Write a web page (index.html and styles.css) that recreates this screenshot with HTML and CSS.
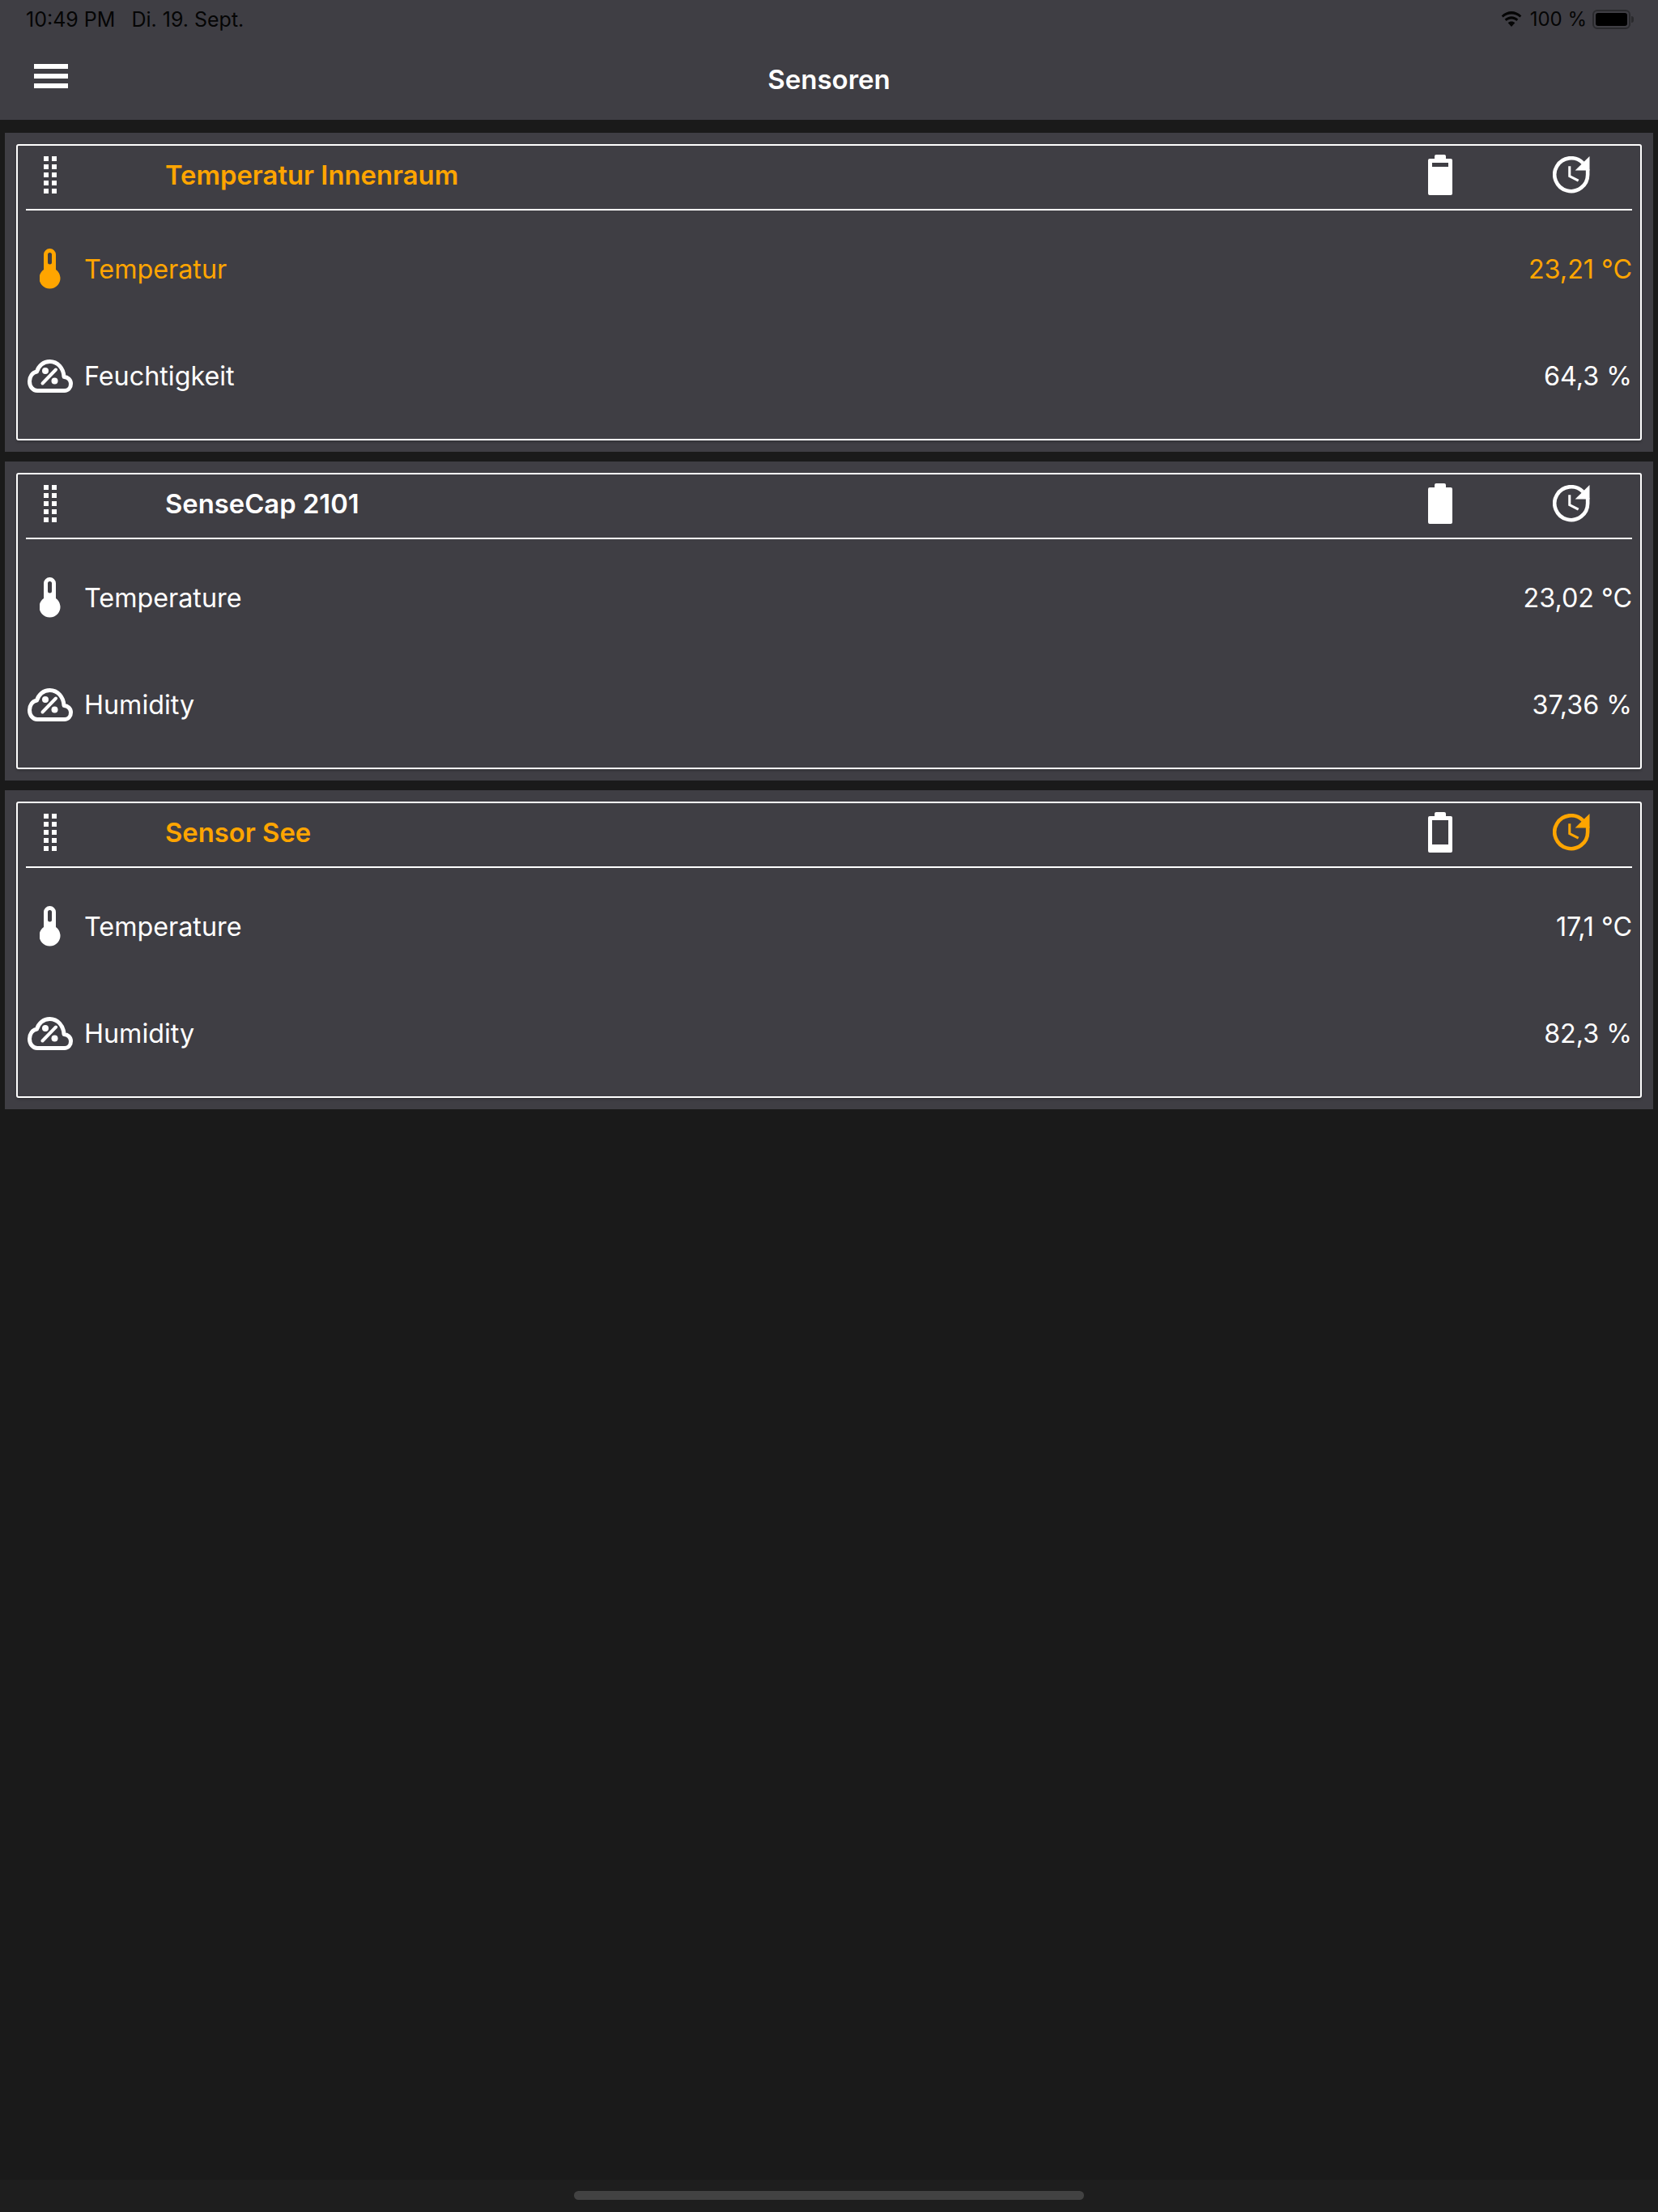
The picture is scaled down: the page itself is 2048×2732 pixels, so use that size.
FILE: index.html
```html
<!DOCTYPE html>
<html lang="de">
<head>
<meta charset="utf-8">
<title>Sensoren</title>
<link rel="stylesheet" href="styles.css">
</head>
<body>
<svg class="defs" width="0" height="0">
  <symbol id="thermo" viewBox="0 0 26 50"><path fill-rule="evenodd" d="M5 7.5a7.5 7.5 0 0 1 15 0V26a13 13 0 1 1-15 0ZM10 7.500v9.500a2.500 2.500 0 0 0 5 0V7.500a2.500 2.500 0 0 0-5 0Z"/></symbol>
  <symbol id="cloud" viewBox="0 0 56 41">
    <path fill="none" stroke="currentColor" stroke-width="5" stroke-linejoin="round" d="M12 38.500H45.500C50.500 38.500 53.500 34.500 53.500 30C53.500 25 49.500 21.500 45 21.500C44.500 10.500 37 2.500 27.500 2.500C19.500 2.500 13.500 8 11.500 15C6 16 2.500 21 2.500 27C2.500 33.500 6.500 38.500 12 38.500Z"/>
    <path fill="none" stroke="currentColor" stroke-width="4" stroke-linecap="round" d="M18.500 29.500L35 12.500"/>
    <circle cx="22" cy="14" r="4" fill="currentColor"/>
    <circle cx="33.500" cy="26.500" r="4" fill="currentColor"/>
  </symbol>
  <symbol id="batt-full" viewBox="0 0 30 50"><path d="M8 2a2 2 0 0 1 2-2h10a2 2 0 0 1 2 2v3h6a2 2 0 0 1 2 2v41a2 2 0 0 1-2 2H2a2 2 0 0 1-2-2V7a2 2 0 0 1 2-2h6Z"/></symbol>
  <symbol id="batt-high" viewBox="0 0 30 50"><path fill-rule="evenodd" d="M8 2a2 2 0 0 1 2-2h10a2 2 0 0 1 2 2v3h6a2 2 0 0 1 2 2v41a2 2 0 0 1-2 2H2a2 2 0 0 1-2-2V7a2 2 0 0 1 2-2h6ZM5 10v5h20v-5Z"/></symbol>
  <symbol id="batt-low" viewBox="0 0 30 50"><path fill-rule="evenodd" d="M8 2a2 2 0 0 1 2-2h10a2 2 0 0 1 2 2v3h6a2 2 0 0 1 2 2v41a2 2 0 0 1-2 2H2a2 2 0 0 1-2-2V7a2 2 0 0 1 2-2h6ZM5 10v30h20V10Z"/></symbol>
  <symbol id="clock" viewBox="0 0 45 45">
    <path fill="none" stroke="currentColor" stroke-width="4.500" d="M42.200 16V22.200A20 20 0 1 1 36.500 8.200"/>
    <path fill="currentColor" d="M44.500 0V17H27Z"/>
    <path fill="none" stroke="currentColor" stroke-width="3" d="M20.300 12V24L31 29.500"/>
  </symbol>
</svg>

<header class="topbar">
  <div class="status">
    <span class="time">10:49 PM</span>
    <span class="date">Di. 19. Sept.</span>
    <span class="status-right">
      <svg class="wifi" viewBox="0 0 28 20"><path d="M14 3.500c4 0 7.500 1.500 10.300 4.100l2-2.200C22.700 2 18.500 0 14 0S5.300 2 1.700 5.400l2 2.200C6.500 5 10 3.500 14 3.500Z"/><path d="M14 9.500c2.500 0 4.700 1 6.300 2.500l2-2.200C20 7.500 17.100 6.200 14 6.200s-6 1.300-8.300 3.600l2 2.200C9.300 10.500 11.500 9.500 14 9.500Z"/><path d="M14 12.500c-1.700 0-3.200.7-4.300 1.700L14 19l4.300-4.800c-1.100-1-2.600-1.700-4.300-1.700Z"/></svg>
      <span class="pct">100 %</span>
      <span class="sysbatt"><span class="sysbatt-fill"></span></span>
      <span class="sysbatt-cap"></span>
    </span>
  </div>
  <div class="nav">
    <span class="burger"><i></i><i></i><i></i></span>
    <span class="nav-title">Sensoren</span>
  </div>
</header>

<main class="list">
  <section class="card">
    <div class="frame">
      <div class="head">
        <span class="grip"><i></i><i></i><i></i><i></i><i></i><i></i><i></i><i></i><i></i><i></i></span>
        <span class="name warn">Temperatur Innenraum</span>
        <svg class="ico-batt"><use href="#batt-high"/></svg>
        <svg class="ico-clock"><use href="#clock"/></svg>
      </div>
      <div class="row warn">
        <span class="row-icon"><svg class="ico-thermo"><use href="#thermo"/></svg></span>
        <span class="label">Temperatur</span>
        <span class="value">23,21 °C</span>
      </div>
      <div class="row">
        <span class="row-icon"><svg class="ico-cloud"><use href="#cloud"/></svg></span>
        <span class="label">Feuchtigkeit</span>
        <span class="value">64,3 %</span>
      </div>
    </div>
  </section>

  <section class="card">
    <div class="frame">
      <div class="head">
        <span class="grip"><i></i><i></i><i></i><i></i><i></i><i></i><i></i><i></i><i></i><i></i></span>
        <span class="name">SenseCap 2101</span>
        <svg class="ico-batt"><use href="#batt-full"/></svg>
        <svg class="ico-clock"><use href="#clock"/></svg>
      </div>
      <div class="row">
        <span class="row-icon"><svg class="ico-thermo"><use href="#thermo"/></svg></span>
        <span class="label">Temperature</span>
        <span class="value">23,02 °C</span>
      </div>
      <div class="row">
        <span class="row-icon"><svg class="ico-cloud"><use href="#cloud"/></svg></span>
        <span class="label">Humidity</span>
        <span class="value">37,36 %</span>
      </div>
    </div>
  </section>

  <section class="card">
    <div class="frame">
      <div class="head">
        <span class="grip"><i></i><i></i><i></i><i></i><i></i><i></i><i></i><i></i><i></i><i></i></span>
        <span class="name warn">Sensor See</span>
        <svg class="ico-batt"><use href="#batt-low"/></svg>
        <svg class="ico-clock warn"><use href="#clock"/></svg>
      </div>
      <div class="row">
        <span class="row-icon"><svg class="ico-thermo"><use href="#thermo"/></svg></span>
        <span class="label">Temperature</span>
        <span class="value">17,1 °C</span>
      </div>
      <div class="row">
        <span class="row-icon"><svg class="ico-cloud"><use href="#cloud"/></svg></span>
        <span class="label">Humidity</span>
        <span class="value">82,3 %</span>
      </div>
    </div>
  </section>
</main>

<footer class="homearea"><span class="homebar"></span></footer>
</body>
</html>
```
FILE: styles.css
```css
* { box-sizing: border-box; }
html, body { margin: 0; height: 100%; }
body {
  width: 2048px;
  height: 2732px;
  background: #1a1a1a;
  color: #fff;
  font-family: Inter, "Noto Sans", sans-serif;
  display: flex;
  flex-direction: column;
  overflow: hidden;
}
.defs { position: absolute; }
svg { fill: currentColor; display: block; }

.topbar { height: 148px; background: #3f3e44; flex: none; }
.status {
  height: 47px;
  padding: 0 30px 0 32px;
  display: flex;
  align-items: center;
  color: #050505;
  font-size: 25px;
}
.date { margin-left: 20px; }
.status-right { margin-left: auto; display: flex; align-items: center; }
.wifi { width: 28px; height: 20px; margin-right: 9px; }
.pct { margin-right: 7px; font-size: 24px; }
.sysbatt {
  width: 47px;
  height: 24px;
  border: 2px solid #2a2a2d;
  border-radius: 6px;
  padding: 2px;
  display: block;
}
.sysbatt-fill { display: block; height: 100%; background: #000; border-radius: 3px; }
.sysbatt-cap { width: 3px; height: 8px; background: #2a2a2d; border-radius: 0 3px 3px 0; margin-left: 1px; }

.nav { height: 101px; position: relative; display: flex; align-items: center; justify-content: center; }
.nav-title { font-size: 33px; font-weight: 600; }
.burger {
  position: absolute;
  left: 42px;
  top: 32px;
  width: 42px;
  display: flex;
  flex-direction: column;
  gap: 6px;
}
.burger i { display: block; height: 6px; background: #fff; }

.list {
  flex: 1;
  padding: 16px 6px 0;
  display: flex;
  flex-direction: column;
  gap: 12px;
}
.card { height: 394px; background: #3f3e44; padding: 14px; }
.frame {
  height: 366px;
  border: 2px solid #fff;
  border-radius: 3px;
  padding: 0 10px;
  box-shadow: 0 2px 3px rgba(0,0,0,.2);
}
.head {
  height: 80px;
  padding-bottom: 6px;
  border-bottom: 2px solid #fff;
  display: flex;
  align-items: center;
}
.grip {
  width: 16px;
  margin: 0 22px;
  display: grid;
  grid-template-columns: 6px 6px;
  column-gap: 4px;
  row-gap: 4px;
  flex: none;
}
.grip i { display: block; width: 6px; height: 6px; background: #fff; }
.name {
  font-size: 32.800px;
  font-weight: 600;
  margin-left: 112px;
  flex: 1;
  white-space: nowrap;
}
.warn { color: #ffa500; }
.ico-batt { width: 30px; height: 50px; flex: none; }
.ico-clock { width: 46px; height: 46px; margin: 0 52px 0 124px; flex: none; }

.row {
  height: 132px;
  display: flex;
  align-items: center;
  font-size: 32.300px;
}
.head + .row { margin-top: 6px; }
.row-icon { width: 60px; margin-right: 12px; display: flex; justify-content: center; flex: none; }
.ico-thermo { width: 26px; height: 50px; }
.ico-cloud { width: 56px; height: 41px; }
.value { margin-left: auto; }

.homearea {
  height: 40px;
  flex: none;
  background: #1e1e1e;
  display: flex;
  justify-content: center;
  padding-top: 14px;
}
.homebar { width: 630px; height: 11px; border-radius: 6px; background: #424242; }
```
